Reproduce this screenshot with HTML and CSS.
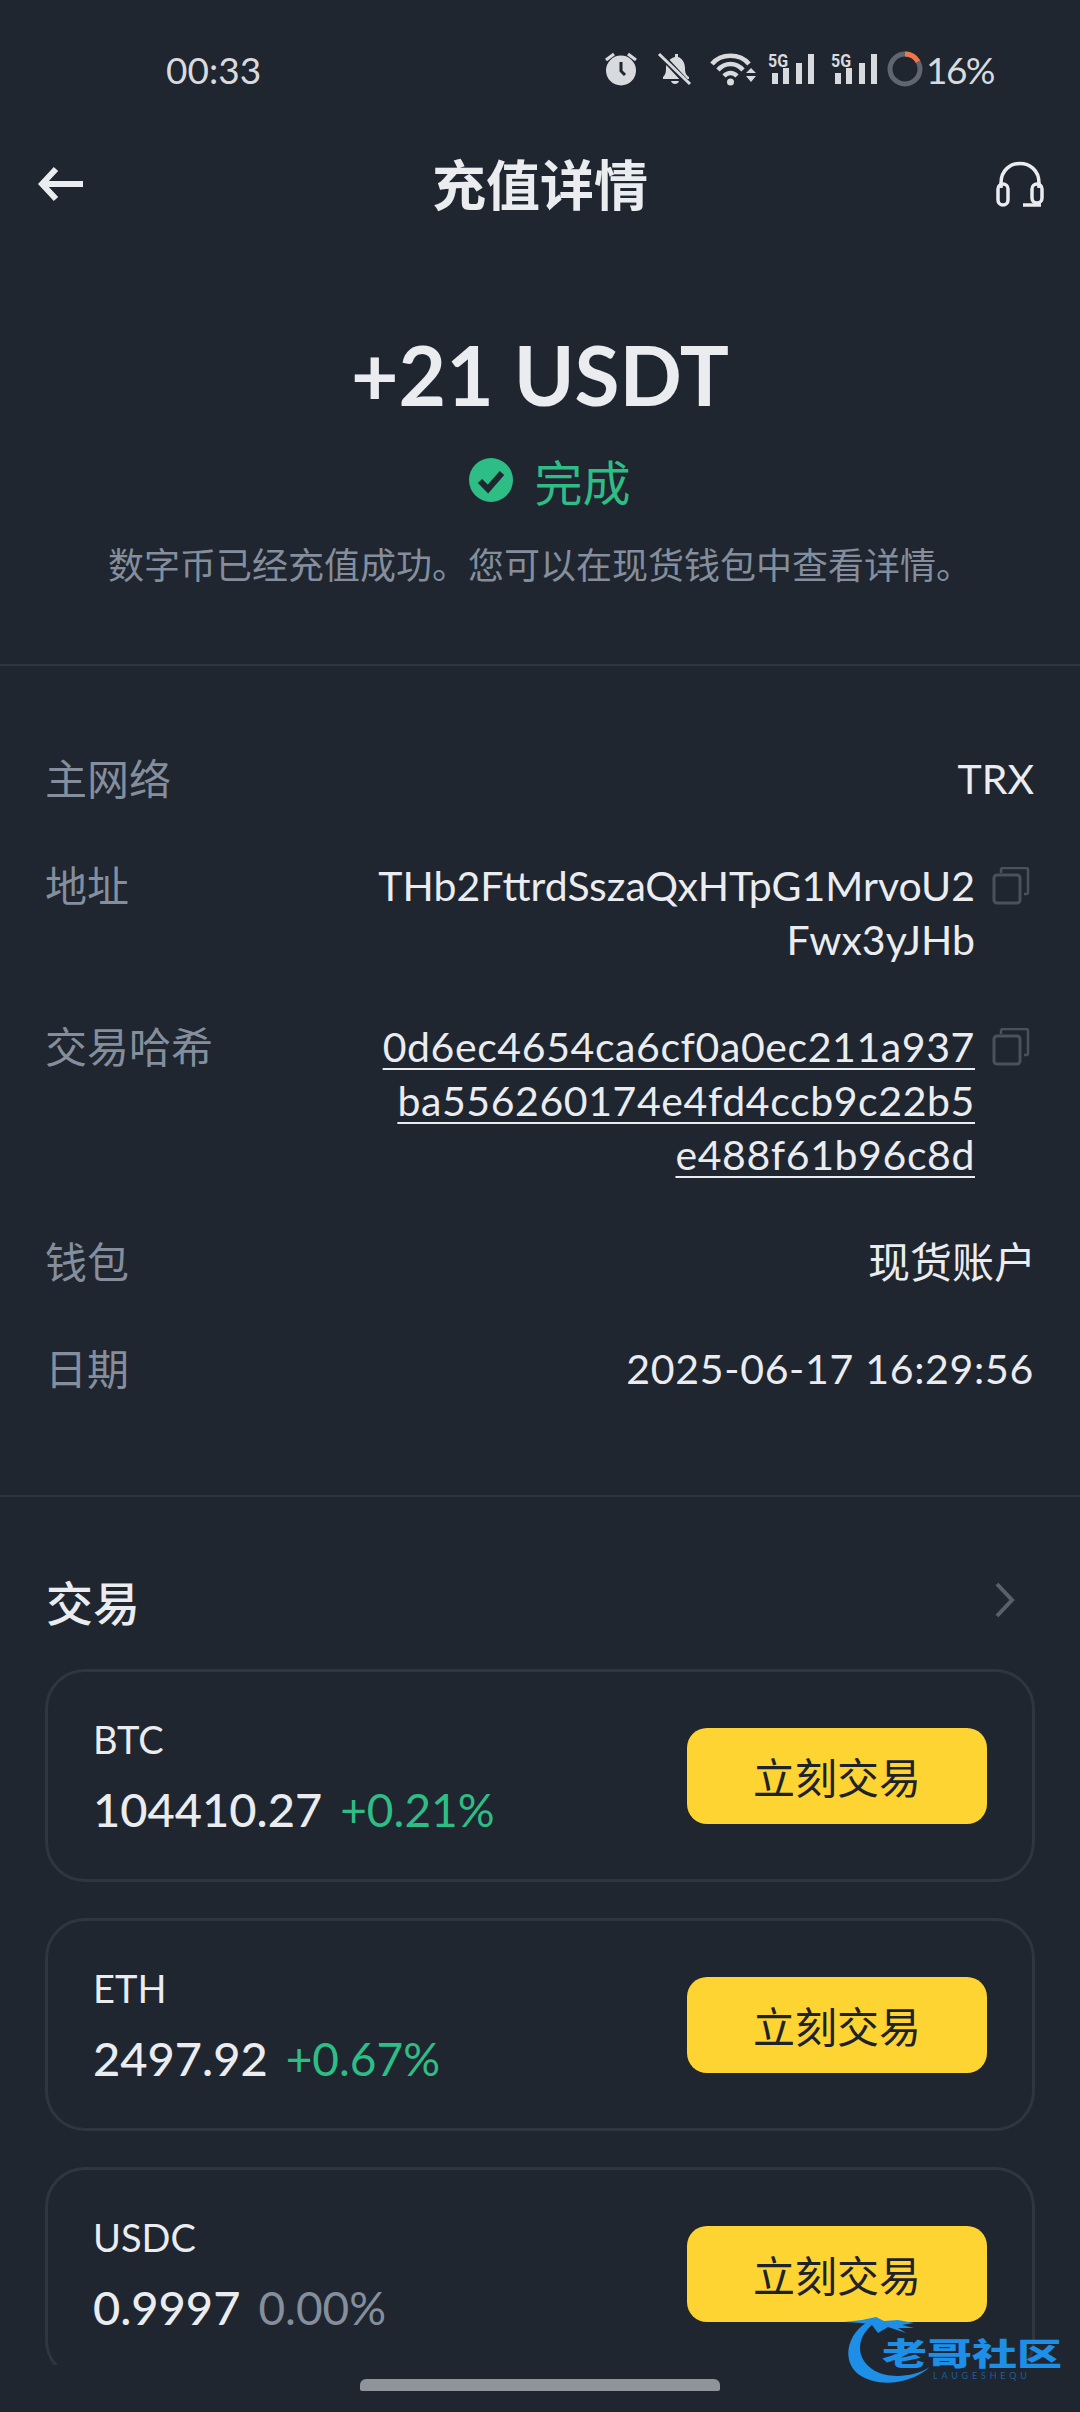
FILE: index.html
```html
<!DOCTYPE html>
<html lang="zh-CN">
<head>
  <meta charset="UTF-8">
  <title>充值详情</title>
  <link rel="stylesheet" href="styles.css">
</head>
<body>
  <div class="status-bar">
    <span class="time">00:33</span>
    <div class="status-icons">
      <svg class="ic-alarm" width="34" height="34" viewBox="0 0 34 34">
        <circle cx="17" cy="18.5" r="15" fill="#d8dadd"/>
        <path d="M17 10v9l4 4" fill="none" stroke="#1f2630" stroke-width="3"/>
        <path d="M2 8l8-6M32 8l-8-6" stroke="#d8dadd" stroke-width="3.2" fill="none"/>
      </svg>
      <svg class="ic-bell" width="34" height="34" viewBox="0 0 34 34">
        <path d="M5 25c2-2 3-4 3-9 0-5 4-10 9-11V2h3v3c4 1 7 6 7 11 0 5 1 7 4 9v2H5z" fill="#d8dadd"/>
        <path d="M13 29h8c-1 4-7 4-8 0z" fill="#d8dadd"/>
        <path d="M2 2l29 31" stroke="#1f2630" stroke-width="6"/>
        <path d="M1 2l31 30" stroke="#d8dadd" stroke-width="3"/>
      </svg>
      <svg class="ic-wifi" width="46" height="34" viewBox="0 0 46 34">
        <path d="M2 12C11 1 30 1 39 12" fill="none" stroke="#d8dadd" stroke-width="4.5"/>
        <path d="M8 18C15 10 26 10 33 18" fill="none" stroke="#d8dadd" stroke-width="4.5"/>
        <path d="M14 24c4-4 9-4 13 0" fill="none" stroke="#d8dadd" stroke-width="4.5"/>
        <circle cx="20.500" cy="30" r="3.500" fill="#d8dadd"/>
        <path d="M36 21l5-5 5 5zM36 24h10l-5 6z" fill="#d8dadd"/>
      </svg>
      <svg class="ic-signal" width="46" height="32" viewBox="0 0 46 32">
        <text x="0" y="12" transform="scale(1 1.2)" class="sig-text">5G</text>
        <path d="M4 20h6v11H4zM15 15h6v16h-6zM28 10h6v21h-6zM40 1h6v30h-6z" fill="#d8dadd"/>
      </svg>
      <svg class="ic-signal" width="46" height="32" viewBox="0 0 46 32">
        <text x="0" y="12" transform="scale(1 1.2)" class="sig-text">5G</text>
        <path d="M4 20h6v11H4zM15 15h6v16h-6zM28 10h6v21h-6zM40 1h6v30h-6z" fill="#d8dadd"/>
      </svg>
      <svg class="ic-battery" width="36" height="36" viewBox="0 0 36 36">
        <circle cx="18" cy="18" r="15" fill="none" stroke="#60666f" stroke-width="5"/>
        <path d="M18 3a15 15 0 0 1 13 7.500" fill="none" stroke="#f0764a" stroke-width="5"/>
      </svg>
      <span class="battery">16%</span>
    </div>
  </div>

  <main class="content">
    <header class="top-nav">
      <svg width="46" height="36" viewBox="0 0 46 36">
        <path d="M18 3L4 18l14 15M4 18h41" fill="none" stroke="#eaecef" stroke-width="6"/>
      </svg>
      <h1>充值详情</h1>
      <svg width="48" height="46" viewBox="0 0 48 46">
        <path d="M5 27V22C5 -4 43 -4 43 22V27" fill="none" stroke="#eaecef" stroke-width="3.500"/>
        <rect x="2" y="23" width="10" height="21" rx="5" fill="none" stroke="#eaecef" stroke-width="3.500"/>
        <rect x="36" y="23" width="10" height="19" rx="5" fill="none" stroke="#eaecef" stroke-width="3.500"/>
        <path d="M27 44h18" stroke="#eaecef" stroke-width="3.500"/>
      </svg>
    </header>

    <section class="hero">
      <div class="amount">+21 USDT</div>
      <div class="state">
        <svg width="44" height="44" viewBox="0 0 44 44">
          <circle cx="22" cy="22" r="22" fill="#2ebd85"/>
          <path d="M11 23l8 8 14-16" fill="none" stroke="#1f2630" stroke-width="6"/>
        </svg>
        <span>完成</span>
      </div>
      <p class="desc">数字币已经充值成功。您可以在现货钱包中查看详情。</p>
    </section>

    <section class="details">
      <div class="row">
        <span class="label">主网络</span>
        <span class="value">TRX</span>
      </div>
      <div class="row">
        <span class="label">地址</span>
        <div class="value-copy">
          <span class="value">THb2FttrdSszaQxHTpG1MrvoU2<br>Fwx3yJHb</span>
          <svg class="copy" width="38" height="38" viewBox="0 0 38 38">
            <path d="M9 6V3a2 2 0 0 1 2-2h23a2 2 0 0 1 2 2v22a2 2 0 0 1-2 2h-2" fill="none" stroke="#4b515b" stroke-width="2.500"/>
            <rect x="2" y="8" width="26" height="28" rx="3" fill="none" stroke="#4b515b" stroke-width="3"/>
          </svg>
        </div>
      </div>
      <div class="row">
        <span class="label">交易哈希</span>
        <div class="value-copy">
          <span class="value link">0d6ec4654ca6cf0a0ec211a937<br>ba556260174e4fd4ccb9c22b5<br>e488f61b96c8d</span>
          <svg class="copy" width="38" height="38" viewBox="0 0 38 38">
            <path d="M9 6V3a2 2 0 0 1 2-2h23a2 2 0 0 1 2 2v22a2 2 0 0 1-2 2h-2" fill="none" stroke="#4b515b" stroke-width="2.500"/>
            <rect x="2" y="8" width="26" height="28" rx="3" fill="none" stroke="#4b515b" stroke-width="3"/>
          </svg>
        </div>
      </div>
      <div class="row">
        <span class="label">钱包</span>
        <span class="value value-cn">现货账户</span>
      </div>
      <div class="row">
        <span class="label">日期</span>
        <span class="value value-date">2025-06-17 16:29:56</span>
      </div>
    </section>

    <section class="trade">
      <div class="trade-head">
        <h2>交易</h2>
        <svg width="22" height="36" viewBox="0 0 22 36">
          <path d="M3 2l15 16L3 34" fill="none" stroke="#5a606a" stroke-width="4"/>
        </svg>
      </div>
      <div class="card">
        <div class="coin">
          <div class="coin-name">BTC</div>
          <div class="coin-price">104410.27<span class="pct up">+0.21%</span></div>
        </div>
        <button class="trade-btn">立刻交易</button>
      </div>
      <div class="card">
        <div class="coin">
          <div class="coin-name">ETH</div>
          <div class="coin-price">2497.92<span class="pct up">+0.67%</span></div>
        </div>
        <button class="trade-btn">立刻交易</button>
      </div>
      <div class="card">
        <div class="coin">
          <div class="coin-name">USDC</div>
          <div class="coin-price">0.9997<span class="pct flat">0.00%</span></div>
        </div>
        <button class="trade-btn">立刻交易</button>
      </div>
    </section>
  </main>

  <div class="home-bar"></div>

  <div class="stamp">
    <svg width="92" height="72" viewBox="0 0 92 72">
      <path d="M22 7C4 18-3 44 14 58c18 13 50 12 72-7-18 11-44 12-58 2C12 42 12 22 28 9z" fill="#1d8fe6"/>
      <path d="M0 6L18 4 32 1l8 4 14-1 16 3-12 2 12 3H54l8 5-18-6-10 6-6-8-10-2z" fill="#1d8fe6"/>
    </svg>
    <div class="stamp-name">老哥社区</div>
    <div class="stamp-sub">LAUGESHEQU</div>
  </div>
</body>
</html>
```

FILE: styles.css
```css
* {
  box-sizing: border-box;
}

body {
  margin: 0;
  width: 1080px;
  height: 2412px;
  overflow: hidden;
  position: relative;
  background: #1f2630;
  color: #eaecef;
  font-family: Lato, "Noto Sans CJK SC", sans-serif;
}

.status-bar {
  height: 140px;
  padding: 0 86px 2px 166px;
  display: flex;
  align-items: center;
  justify-content: space-between;
  color: #d8dadd;
}

.time {
  font-size: 37px;
}

.status-icons {
  display: flex;
  align-items: center;
}

.status-icons svg {
  overflow: visible;
}

.ic-alarm { margin-right: 20px; }
.ic-bell { margin-right: 18px; }
.ic-wifi { margin-right: 12px; }
.ic-signal { margin-right: 17px; }
.ic-battery { margin-left: -7px; margin-right: 3px; }

.sig-text {
  font-family: Roboto, sans-serif;
  font-size: 16px;
  font-weight: 700;
  fill: #d8dadd;
}

.battery {
  font-size: 37px;
  letter-spacing: -1.5px;
}

.content {
  height: 2225px;
  overflow: hidden;
}

.top-nav {
  height: 88px;
  padding: 0 36px 0 38px;
  display: flex;
  align-items: center;
  justify-content: space-between;
}

.top-nav h1 {
  margin: 0 0 4px;
  font-size: 54px;
  font-weight: 700;
}

.hero {
  padding: 106px 0 72px;
  border-bottom: 2px solid #2f3640;
  text-align: center;
}

.amount {
  font-size: 82px;
  line-height: 80px;
  font-weight: 700;
}

.state {
  margin-top: 43px;
  height: 46px;
  padding-left: 20px;
  display: flex;
  align-items: center;
  justify-content: center;
  gap: 21px;
  color: #2ebd85;
  font-size: 48px;
}

.desc {
  margin: 37px 0 2px;
  font-size: 36px;
  line-height: 50px;
  color: #848e9c;
}

.details {
  padding: 86px 46px 99px 45px;
  border-bottom: 2px solid #2f3640;
  display: flex;
  flex-direction: column;
  gap: 53px;
}

.row {
  display: flex;
  justify-content: space-between;
  align-items: flex-start;
  font-size: 41px;
  line-height: 54px;
}

.label {
  color: #848e9c;
  font-size: 42px;
}

.value {
  text-align: right;
}

.value-cn {
  font-size: 42px;
  margin-right: -2px;
}

.value-date {
  letter-spacing: 0.7px;
}

.value-copy {
  display: flex;
  gap: 17px;
  align-items: flex-start;
  margin-right: 4px;
}

.copy {
  margin-top: 8px;
}

.link {
  letter-spacing: 0.6px;
  text-decoration: underline;
  text-decoration-thickness: 2px;
  text-underline-offset: 6px;
}

.trade {
  padding: 73px 45px 0;
}

.trade-head {
  height: 60px;
  margin-bottom: 39px;
  padding: 0 19px 0 1px;
  display: flex;
  align-items: center;
  justify-content: space-between;
}

.trade-head h2 {
  margin: 0;
  font-size: 47px;
  font-weight: 500;
}

.card {
  height: 213px;
  margin-bottom: 36px;
  padding: 0 45px;
  border: 3px solid #2f3640;
  border-radius: 40px;
  display: flex;
  align-items: center;
  justify-content: space-between;
}

.coin {
  display: flex;
  flex-direction: column;
  gap: 18px;
  margin-top: -2px;
}

.coin-name {
  font-size: 38px;
  line-height: 52px;
}

.coin-price {
  font-size: 47px;
  line-height: 52px;
  font-weight: 500;
}

.pct {
  margin-left: 18px;
  font-weight: 400;
  font-size: 46px;
}

.up { color: #2ebd85; }
.flat { color: #848e9c; }

.trade-btn {
  width: 300px;
  height: 96px;
  border: none;
  border-radius: 20px;
  background: #fdd431;
  color: #1e2329;
  font-family: inherit;
  font-size: 42px;
}

.home-bar {
  width: 360px;
  height: 12px;
  margin: 14px auto 0;
  border-radius: 6px 6px 2px 2px;
  background: #8f949b;
}

/* corner stamp sits over the last card */
.stamp {
  position: absolute;
  left: 844px;
  top: 2316px;
  width: 225px;
  height: 76px;
}

.stamp-name {
  position: absolute;
  left: 38px;
  top: 22px;
  font-size: 45px;
  line-height: 30px;
  font-weight: 900;
  color: #1d8fe6;
  white-space: nowrap;
  transform: scaleY(0.68);
}

.stamp-sub {
  position: absolute;
  left: 89px;
  top: 55px;
  font-size: 9px;
  line-height: 9px;
  letter-spacing: 3.8px;
  color: #1a5f9c;
  white-space: nowrap;
}
```
